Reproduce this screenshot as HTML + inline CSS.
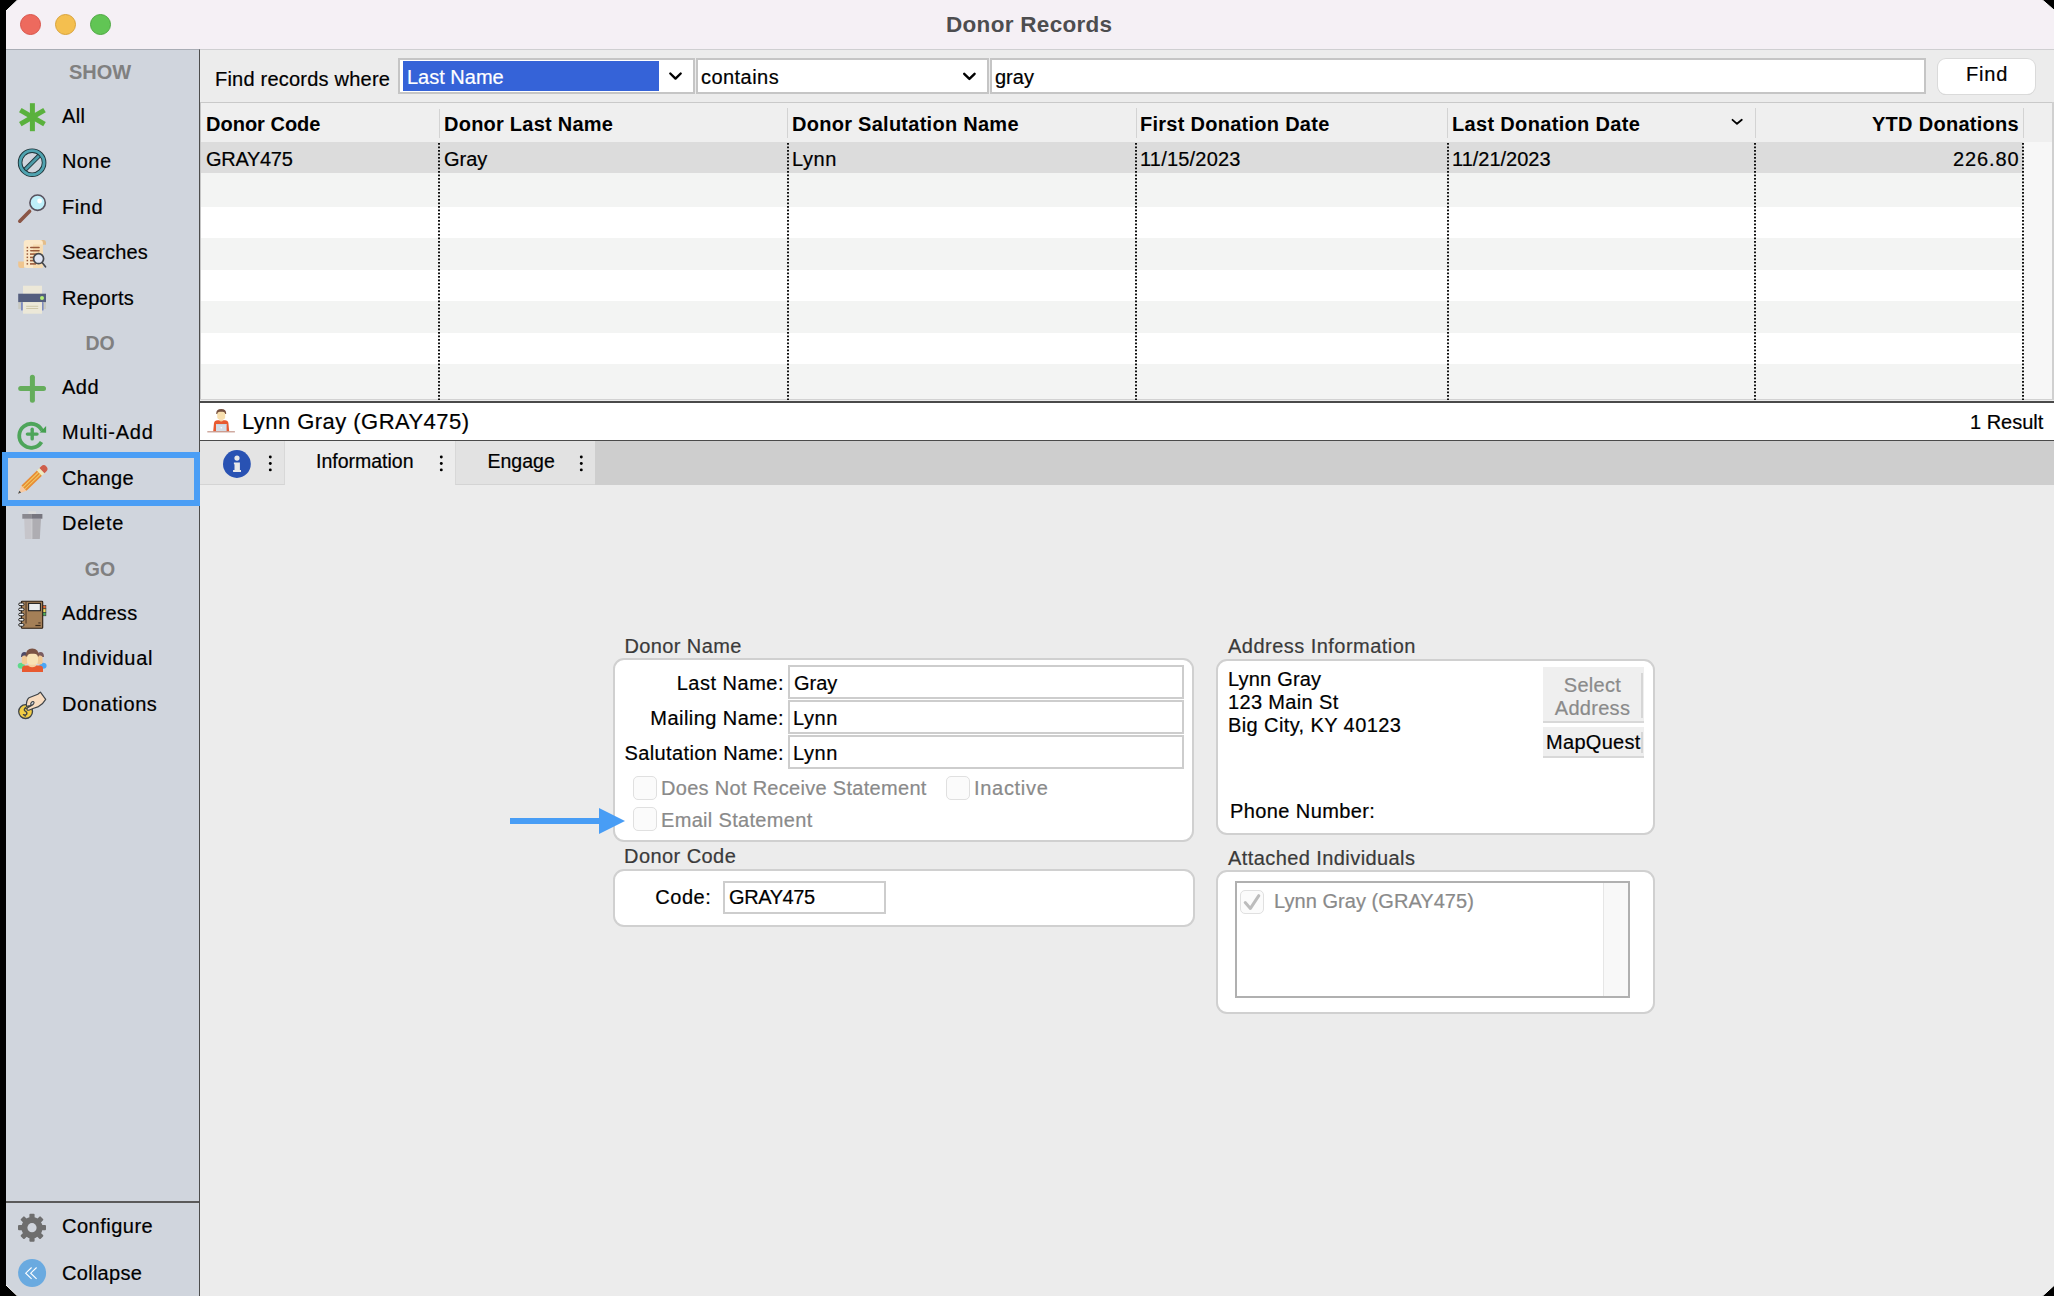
<!DOCTYPE html>
<html><head><meta charset="utf-8">
<style>
*{box-sizing:border-box;margin:0;padding:0}
html,body{width:2054px;height:1296px;overflow:hidden;background:#000}
body{font-family:"Liberation Sans",sans-serif;font-size:20px;color:#000;position:relative;-webkit-text-stroke:0.2px currentColor}
.b,.hd{-webkit-text-stroke:0}
.a{position:absolute}
.t{position:absolute;white-space:nowrap;line-height:20px;font-size:20px}
.b{font-weight:bold}
#win{position:absolute;left:6px;top:0;width:2048px;height:1296px;overflow:hidden;background:#ececec}
#pg{position:absolute;left:-6px;top:0;width:2054px;height:1296px}
.tl{position:absolute;top:14px;width:21px;height:21px;border-radius:50%}
.hd{position:absolute;font-weight:bold;color:#808080;font-size:19.5px;line-height:20px;text-align:center;width:188px;left:6px}
.ic{position:absolute}
.vl{position:absolute;width:1px;background:#d3d3d3}
.dl{position:absolute;width:2px;background-image:linear-gradient(#1a1a1a 50%,transparent 50%);background-size:2px 4px}
.box{position:absolute;background:#fff;border:2px solid #d0d0d0;border-radius:11px}
.fld{position:absolute;background:#fff;border:2px solid #cdcdcd}
.cb{position:absolute;width:24px;height:24px;border:1px solid #e0e0e0;border-radius:5px;background:#fbfbfb}
.gl{color:#3a3a3a}
.gr{color:#8a8a8a}
</style></head>
<body>
<div id="win"><div id="pg">
  <!-- title bar -->
  <div class="a" style="left:0;top:0;width:2054px;height:49px;background:#f5f0f5"></div>
  <div class="a" style="left:0;top:49px;width:2054px;height:1px;background:#cfcfd1"></div>
  <div class="tl" style="left:20px;background:#ed6a5e;border:1px solid #d9544a"></div>
  <div class="tl" style="left:55px;background:#f4bf4f;border:1px solid #d9a33a"></div>
  <div class="tl" style="left:90px;background:#61c554;border:1px solid #4ea842"></div>
  <div class="t b" style="left:946px;top:13px;font-size:22.5px;line-height:23px;color:#4d4d4f;letter-spacing:0.3px">Donor Records</div>

  <!-- sidebar -->
  <div class="a" style="left:0;top:49px;width:200px;height:1247px;background:#d0d5dd;border-right:1px solid #4d4d4d;border-top:1px solid #a9adb5"></div>
  <div class="hd" style="top:62px;font-size:20px">SHOW</div>
  <div class="t" style="left:62px;top:106px;letter-spacing:0.35px">All</div>
  <div class="t" style="left:62px;top:151px;letter-spacing:0.4px">None</div>
  <div class="t" style="left:62px;top:197px;letter-spacing:0.6px">Find</div>
  <div class="t" style="left:62px;top:242px;letter-spacing:0.19px">Searches</div>
  <div class="t" style="left:62px;top:288px;letter-spacing:0.3px">Reports</div>
  <div class="hd" style="top:333px">DO</div>
  <div class="t" style="left:62px;top:377px;letter-spacing:0.5px">Add</div>
  <div class="t" style="left:62px;top:422px;letter-spacing:0.8px">Multi-Add</div>
  <div class="t" style="left:62px;top:468px;letter-spacing:0.3px">Change</div>
  <div class="t" style="left:62px;top:513px;letter-spacing:0.7px">Delete</div>
  <div class="hd" style="top:559px">GO</div>
  <div class="t" style="left:62px;top:603px;letter-spacing:0.3px">Address</div>
  <div class="t" style="left:62px;top:648px;letter-spacing:0.65px">Individual</div>
  <div class="t" style="left:62px;top:694px;letter-spacing:0.6px">Donations</div>
  <div class="a" style="left:6px;top:1201px;width:193px;height:2px;background:#5a5a5a"></div>
  <div class="t" style="left:62px;top:1216px;letter-spacing:0.5px">Configure</div>
  <div class="t" style="left:62px;top:1263px;letter-spacing:0.29px">Collapse</div>

  <!-- toolbar -->
  <div class="a" style="left:200px;top:102px;width:1854px;height:1px;background:#c9c9c9"></div>
  <div class="t" style="left:215px;top:69px;letter-spacing:0.22px">Find records where</div>
  <div class="fld" style="left:398px;top:58px;width:297px;height:36px;border-color:#c5c5c5"></div>
  <div class="a" style="left:403px;top:61px;width:256px;height:30px;background:#3563d8"></div>
  <div class="t" style="left:407px;top:67px;color:#fff">Last Name</div>
  <div class="fld" style="left:696px;top:58px;width:293px;height:36px;border-color:#c5c5c5"></div>
  <div class="t" style="left:701px;top:67px;letter-spacing:0.45px">contains</div>
  <div class="fld" style="left:990px;top:58px;width:936px;height:36px;border-color:#c5c5c5"></div>
  <div class="t" style="left:995px;top:67px">gray</div>
  <div class="a" style="left:1938px;top:59px;width:97px;height:35px;background:#fff;border-radius:8px;box-shadow:0 0 0 1px #dadada,0 1px 0 0 #cdcdcd"></div>
  <div class="t" style="left:1966px;top:64px;letter-spacing:0.8px">Find</div>

  <!-- table -->
  <div class="a" style="left:200px;top:103px;width:1854px;height:39px;background:#efefef"></div>
  <div class="a" style="left:201px;top:142px;width:1822px;height:31px;background:#dcdcdc"></div>
  <div class="a" style="left:201px;top:173px;width:1826px;height:34px;background:#f3f4f3"></div>
  <div class="a" style="left:201px;top:207px;width:1826px;height:31px;background:#fff"></div>
  <div class="a" style="left:201px;top:238px;width:1826px;height:32px;background:#f3f4f3"></div>
  <div class="a" style="left:201px;top:270px;width:1826px;height:31px;background:#fff"></div>
  <div class="a" style="left:201px;top:301px;width:1826px;height:32px;background:#f3f4f3"></div>
  <div class="a" style="left:201px;top:333px;width:1826px;height:31px;background:#fff"></div>
  <div class="a" style="left:201px;top:364px;width:1826px;height:35px;background:#f3f4f3"></div>
  <div class="a" style="left:2024px;top:142px;width:28px;height:257px;background:#f7f7f7"></div>
  <div class="a" style="left:200px;top:102px;width:1px;height:298px;background:#c6c6c6"></div>
  <div class="a" style="left:2052px;top:102px;width:2px;height:298px;background:#d0d0d0"></div>
  <div class="a" style="left:200px;top:399px;width:1854px;height:1px;background:#d2d2d2"></div>
  <div class="vl" style="left:439px;top:109px;height:29px"></div>
  <div class="vl" style="left:787px;top:108px;height:30px"></div>
  <div class="vl" style="left:1136px;top:108px;height:30px"></div>
  <div class="vl" style="left:1447px;top:108px;height:30px"></div>
  <div class="vl" style="left:1755px;top:108px;height:30px"></div>
  <div class="vl" style="left:2023px;top:108px;height:30px"></div>
  <svg class="a" style="left:438px;top:143px" width="2" height="257"><line x1="1" y1="0" x2="1" y2="257" stroke="#111" stroke-width="2" stroke-dasharray="1.75 1.75"/></svg>
  <svg class="a" style="left:787px;top:143px" width="2" height="257"><line x1="1" y1="0" x2="1" y2="257" stroke="#111" stroke-width="2" stroke-dasharray="1.75 1.75"/></svg>
  <svg class="a" style="left:1135px;top:143px" width="2" height="257"><line x1="1" y1="0" x2="1" y2="257" stroke="#111" stroke-width="2" stroke-dasharray="1.75 1.75"/></svg>
  <svg class="a" style="left:1447px;top:143px" width="2" height="257"><line x1="1" y1="0" x2="1" y2="257" stroke="#111" stroke-width="2" stroke-dasharray="1.75 1.75"/></svg>
  <svg class="a" style="left:1754px;top:143px" width="2" height="257"><line x1="1" y1="0" x2="1" y2="257" stroke="#111" stroke-width="2" stroke-dasharray="1.75 1.75"/></svg>
  <svg class="a" style="left:2022px;top:143px" width="2" height="257"><line x1="1" y1="0" x2="1" y2="257" stroke="#111" stroke-width="2" stroke-dasharray="1.75 1.75"/></svg>
  <div class="t b" style="left:206px;top:114px">Donor Code</div>
  <div class="t b" style="left:444px;top:114px;letter-spacing:0.24px">Donor Last Name</div>
  <div class="t b" style="left:792px;top:114px;letter-spacing:0.27px">Donor Salutation Name</div>
  <div class="t b" style="left:1140px;top:114px;letter-spacing:0.27px">First Donation Date</div>
  <div class="t b" style="left:1452px;top:114px;letter-spacing:0.33px">Last Donation Date</div>
  <div class="t b" style="left:1872px;top:114px;letter-spacing:0.28px">YTD Donations</div>
  <div class="t" style="left:206px;top:149px;letter-spacing:-0.3px">GRAY475</div>
  <div class="t" style="left:444px;top:149px">Gray</div>
  <div class="t" style="left:792px;top:149px;letter-spacing:0.6px">Lynn</div>
  <div class="t" style="left:1140px;top:149px;letter-spacing:0.2px">11/15/2023</div>
  <div class="t" style="left:1452px;top:149px">11/21/2023</div>
  <div class="t" style="left:1953px;top:149px;letter-spacing:0.88px">226.80</div>

  <!-- record bar -->
  <div class="a" style="left:200px;top:401px;width:1854px;height:2px;background:#4a4a4a"></div>
  <div class="a" style="left:200px;top:403px;width:1854px;height:37px;background:#fff"></div>
  <div class="a" style="left:200px;top:440px;width:1854px;height:2px;background:#4a4a4a"></div>
  <div class="t" style="left:242px;top:411px;font-size:22px;line-height:22px;letter-spacing:0.45px">Lynn Gray (GRAY475)</div>
  <div class="t" style="left:1970px;top:412px">1 Result</div>

  <!-- tabs -->
  <div class="a" style="left:200px;top:441px;width:1854px;height:44px;background:#cecece"></div>
  <div class="a" style="left:200px;top:441px;width:85px;height:44px;background:#e4e4e4;border-bottom:1px solid #d4d4d4;border-right:1px solid #d8d8d8"></div>
  <div class="a" style="left:285px;top:441px;width:170px;height:45px;background:#ececec"></div>
  <div class="a" style="left:455px;top:441px;width:140px;height:44px;background:#e2e2e2;border-bottom:1px solid #d4d4d4;border-left:1px solid #d8d8d8"></div>
  <div class="t" style="left:316px;top:451px;font-size:19.5px">Information</div>
  <div class="t" style="left:487.5px;top:451px;font-size:19.5px">Engage</div>

  <!-- Donor Name box -->
  <div class="t gl" style="left:624.5px;top:636px;letter-spacing:0.38px">Donor Name</div>
  <div class="box" style="left:613px;top:658px;width:581px;height:184px"></div>
  <div class="t" style="left:600px;top:673px;width:184px;text-align:right;letter-spacing:0.5px">Last Name:</div>
  <div class="t" style="left:600px;top:708px;width:184px;text-align:right;letter-spacing:0.45px">Mailing Name:</div>
  <div class="t" style="left:600px;top:743px;width:184px;text-align:right;letter-spacing:0.38px">Salutation Name:</div>
  <div class="fld" style="left:788px;top:665px;width:396px;height:34px"></div>
  <div class="fld" style="left:788px;top:700px;width:396px;height:34px"></div>
  <div class="fld" style="left:788px;top:735px;width:396px;height:34px"></div>
  <div class="t" style="left:794px;top:673px">Gray</div>
  <div class="t" style="left:793px;top:708px;letter-spacing:0.6px">Lynn</div>
  <div class="t" style="left:793px;top:743px;letter-spacing:0.6px">Lynn</div>
  <div class="cb" style="left:633px;top:776px"></div>
  <div class="t gr" style="left:661px;top:778px;letter-spacing:0.3px">Does Not Receive Statement</div>
  <div class="cb" style="left:946px;top:776px"></div>
  <div class="t gr" style="left:974px;top:778px;letter-spacing:0.7px">Inactive</div>
  <div class="cb" style="left:633px;top:807px"></div>
  <div class="t gr" style="left:661px;top:810px;letter-spacing:0.32px">Email Statement</div>

  <!-- arrow -->
  <div class="a" style="left:510px;top:818px;width:90px;height:6px;background:#489df5"></div>
  <svg class="a" style="left:598px;top:807px" width="28" height="28"><polygon points="1,1 27,14 1,27" fill="#489df5"/></svg>

  <!-- Donor Code box -->
  <div class="t gl" style="left:624px;top:846px;letter-spacing:0.44px">Donor Code</div>
  <div class="box" style="left:613px;top:869px;width:582px;height:58px"></div>
  <div class="t" style="left:600px;top:887px;width:111.5px;text-align:right;letter-spacing:0.6px">Code:</div>
  <div class="fld" style="left:723px;top:881px;width:163px;height:33px"></div>
  <div class="t" style="left:729px;top:887px;letter-spacing:-0.4px">GRAY475</div>

  <!-- Address box -->
  <div class="t gl" style="left:1228px;top:636px;letter-spacing:0.47px">Address Information</div>
  <div class="box" style="left:1216px;top:659px;width:439px;height:176px"></div>
  <div class="t" style="left:1228px;top:669px;letter-spacing:0.2px">Lynn Gray</div>
  <div class="t" style="left:1228px;top:692px;letter-spacing:0.35px">123 Main St</div>
  <div class="t" style="left:1228px;top:715px;letter-spacing:0.4px">Big City, KY 40123</div>
  <div class="a" style="left:1543px;top:667px;width:101px;height:56px;background:#efefef;border-bottom:2px solid #d8d8d8"></div>
  <div class="a" style="left:1641px;top:673px;width:2px;height:45px;background:#d6d6d6"></div>
  <div class="t gr" style="left:1543px;top:675px;width:99px;text-align:center;letter-spacing:0.3px">Select</div>
  <div class="t gr" style="left:1543px;top:698px;width:99px;text-align:center;letter-spacing:0.3px">Address</div>
  <div class="a" style="left:1543px;top:727px;width:101px;height:31px;background:#efefef;border-bottom:2px solid #d8d8d8"></div>
  <div class="a" style="left:1641px;top:732px;width:2px;height:21px;background:#d6d6d6"></div>
  <div class="t" style="left:1546px;top:732px;letter-spacing:0.3px">MapQuest</div>
  <div class="t" style="left:1230px;top:801px;letter-spacing:0.4px">Phone Number:</div>

  <!-- Attached box -->
  <div class="t gl" style="left:1228px;top:848px;letter-spacing:0.42px">Attached Individuals</div>
  <div class="box" style="left:1216px;top:870px;width:439px;height:144px"></div>
  <div class="a" style="left:1235px;top:881px;width:395px;height:117px;border:2px solid #b0b0b0;background:#fff"></div>
  <div class="a" style="left:1603px;top:883px;width:25px;height:113px;background:#f8f8f8;border-left:1px solid #e6e6e6"></div>
  <div class="cb" style="left:1240px;top:890px"></div>
  <div class="t gr" style="left:1274px;top:891px;letter-spacing:0.05px">Lynn Gray (GRAY475)</div>

  <!-- sidebar icons -->
  <svg class="a" style="left:12px;top:96px" width="40" height="40" viewBox="0 0 40 40">
    <g stroke="#5ab13d" stroke-width="5"><line x1="20.4" y1="7.2" x2="20.4" y2="35.2"/><line x1="8.3" y1="14.2" x2="32.5" y2="28.2"/><line x1="8.3" y1="28.2" x2="32.5" y2="14.2"/></g>
  </svg>
  <svg class="a" style="left:12px;top:142px" width="40" height="40" viewBox="0 0 40 40">
    <line x1="28.6" y1="12.2" x2="11.6" y2="29.2" stroke="#1f3338" stroke-width="4.6"/>
    <line x1="28.6" y1="12.2" x2="11.6" y2="29.2" stroke="#4d9ba8" stroke-width="2.8"/>
    <circle cx="20.1" cy="20.7" r="12" fill="none" stroke="#1f3338" stroke-width="4.6"/>
    <circle cx="20.1" cy="20.7" r="12" fill="none" stroke="#4fa3b0" stroke-width="2.8"/>
  </svg>
  <svg class="a" style="left:12px;top:187px" width="40" height="40" viewBox="0 0 40 40">
    <line x1="17.6" y1="24.2" x2="7.8" y2="34.2" stroke="#8b5646" stroke-width="3.6" stroke-linecap="round"/>
    <circle cx="25.6" cy="15.7" r="7.7" fill="#bff0fa" stroke="#58525e" stroke-width="1.6"/>
    <circle cx="27.6" cy="14" r="2.4" fill="#fff"/>
  </svg>
  <svg class="a" style="left:12px;top:233px" width="40" height="40" viewBox="0 0 40 40">
    <path d="M14.5 7 H32 Q34 7 34 9.5 V11.7 H20 V9 Q20 7 17 7Z" fill="#e3bd8a"/>
    <rect x="11.7" y="7" width="19.2" height="28" rx="3" fill="#fbe8c9"/>
    <rect x="21" y="11.5" width="9.9" height="23.5" fill="#f7dcb2"/>
    <path d="M6.2 28.5 H12 V35 H8.5 Q6.2 35 6.2 32Z" fill="#efc58f"/>
    <g fill="#9a5a3c"><rect x="14.6" y="13.8" width="1.5" height="1.5"/><rect x="14.6" y="17" width="1.5" height="1.5"/><rect x="14.6" y="20.3" width="1.5" height="1.5"/><rect x="14.6" y="23.6" width="1.5" height="1.5"/><rect x="14.6" y="26.8" width="1.5" height="1.5"/><rect x="14.6" y="30.1" width="1.5" height="1.5"/>
    <rect x="18" y="13.7" width="9.8" height="1.6" rx=".8"/><rect x="18" y="17" width="9.8" height="1.6" rx=".8"/><rect x="18" y="20.3" width="8" height="1.6"/><rect x="18" y="23.6" width="5" height="1.6"/><rect x="18" y="26.8" width="5" height="1.6"/><rect x="18" y="30.1" width="6" height="1.6"/></g>
    <line x1="30.3" y1="29.8" x2="33.5" y2="33.8" stroke="#44474d" stroke-width="1.7" stroke-linecap="round"/>
    <circle cx="26.6" cy="25.7" r="5" fill="#dfe4f3" stroke="#44474d" stroke-width="1.7"/>
  </svg>
  <svg class="a" style="left:12px;top:278px" width="40" height="40" viewBox="0 0 40 40">
    <rect x="6.2" y="24" width="27.8" height="7" fill="#c9cac2"/>
    <rect x="11" y="7.7" width="19" height="8.5" fill="#ece8d8"/>
    <rect x="6.2" y="15.7" width="27.8" height="8.4" fill="#545e7e"/>
    <circle cx="30" cy="20" r="2" fill="#b4ef78"/>
    <rect x="9" y="24" width="1.8" height="8.6" rx=".9" fill="#7e8cc0"/>
    <rect x="29.8" y="24" width="1.8" height="8.6" rx=".9" fill="#7e8cc0"/>
    <rect x="11" y="24.1" width="19" height="11.6" fill="#ece8d8"/>
    <rect x="14.2" y="27.8" width="12" height="1" fill="#cec7a8"/><rect x="14.2" y="30" width="12" height="1" fill="#cec7a8"/>
  </svg>
  <svg class="a" style="left:12px;top:368px" width="40" height="40" viewBox="0 0 40 40">
    <g stroke="#65ad5b" stroke-width="5" stroke-linecap="round"><line x1="20.4" y1="9.3" x2="20.4" y2="32.2"/><line x1="8.7" y1="20.6" x2="31.5" y2="20.6"/></g>
  </svg>
  <svg class="a" style="left:12px;top:413px" width="40" height="40" viewBox="0 0 40 40">
    <path d="M30 17.5 A12 12 0 1 0 29.5 29" fill="none" stroke="#4ea55a" stroke-width="3.8"/>
    <polygon points="34.1,13 34.1,19.8 27.6,19.4" fill="#45a050"/>
    <g stroke="#4ea55a" stroke-width="3.4" stroke-linecap="round"><line x1="20.2" y1="16.3" x2="20.2" y2="25.9"/><line x1="15.4" y1="21.1" x2="25" y2="21.1"/></g>
  </svg>
  <svg class="a" style="left:12px;top:459px" width="40" height="40" viewBox="0 0 40 40">
    <g transform="translate(19.9 21.4) rotate(-44)">
      <path d="M-19.2 0 L-11 -3.6 L-11 3.6Z" fill="#f8caa2"/>
      <path d="M-19.2 0 L-16.2 -1.3 L-16.2 1.3Z" fill="#3f4a50"/>
      <rect x="-11" y="-3.6" width="21.5" height="7.2" fill="#e88d35"/>
      <rect x="-11" y="-1.8" width="21.5" height="0.9" fill="#f2d46a"/>
      <rect x="-11" y="0.9" width="21.5" height="0.9" fill="#f2d46a"/>
      <rect x="10.5" y="-3.6" width="3.5" height="7.2" fill="#efeabf"/>
      <path d="M14 -3.6 H16.5 A3.6 3.6 0 0 1 16.5 3.6 H14Z" fill="#cf5e4b"/>
    </g>
  </svg>
  <svg class="a" style="left:12px;top:504px" width="40" height="40" viewBox="0 0 40 40">
    <rect x="16.5" y="7.3" width="7.5" height="2.5" fill="#dcdcdc"/>
    <path d="M12.2 14.7 H19.8 V34.9 H13Z" fill="#c6c5ca"/>
    <path d="M19.8 14.7 H29 L27.8 34.9 H19.8Z" fill="#aeadb2"/>
    <rect x="19.2" y="14.7" width="1.2" height="20.2" fill="#cdcdd0"/>
    <rect x="10.3" y="10" width="9.6" height="4.7" fill="#8a8990"/>
    <rect x="19.9" y="10" width="10.5" height="4.7" fill="#77767f"/>
  </svg>
  <svg class="a" style="left:12px;top:594px" width="40" height="40" viewBox="0 0 40 40">
    <rect x="9.4" y="7.3" width="21.3" height="27" rx="0.8" fill="#a47f57" stroke="#2a1d10" stroke-width="1.1"/>
    <rect x="13.4" y="8" width="1.3" height="21.5" fill="#5d4530"/>
    <rect x="16.6" y="9.4" width="11.8" height="7.3" fill="#e9ecef" stroke="#222" stroke-width="1.1"/>
    <rect x="31" y="11.5" width="2.9" height="3.3" fill="#f06a30" stroke="#333" stroke-width=".6"/>
    <rect x="31" y="14.8" width="2.9" height="3.5" fill="#f2dc5c" stroke="#333" stroke-width=".6"/>
    <rect x="31" y="18.3" width="2.9" height="3.5" fill="#4fb35a" stroke="#333" stroke-width=".6"/>
    <g fill="#f4f4f4" stroke="#222" stroke-width="1"><rect x="6.7" y="9" width="5.3" height="2.6" rx="1.3"/><rect x="6.7" y="14.1" width="5.3" height="2.6" rx="1.3"/><rect x="6.7" y="19.2" width="5.3" height="2.6" rx="1.3"/><rect x="6.7" y="24.4" width="5.3" height="2.6" rx="1.3"/><rect x="6.7" y="29.6" width="5.3" height="2.6" rx="1.3"/></g>
    <rect x="23.4" y="30.9" width="5.2" height="1.2" fill="#3a2a1a"/><rect x="26.3" y="28" width="2.3" height="1.8" fill="#6a5038"/>
  </svg>
  <svg class="a" style="left:12px;top:640px" width="40" height="40" viewBox="0 0 40 40">
    <ellipse cx="9.3" cy="25.8" rx="3.6" ry="3" fill="#5fd98a"/>
    <ellipse cx="31" cy="25.8" rx="3.6" ry="3" fill="#4ba6f5"/>
    <path d="M9 17 Q9 12 12.5 12 Q15.5 12 15.5 17Z" fill="#4e4a66"/>
    <path d="M25 17 Q25 12 28.5 12 Q32 12 32 17Z" fill="#7a5c60"/>
    <rect x="9.8" y="15.5" width="5.6" height="9" rx="2.5" fill="#f2c994"/>
    <rect x="25" y="15.5" width="5.6" height="9" rx="2.5" fill="#f2c994"/>
    <path d="M10 32 V28.5 Q10 25.5 14 25.5 H27 Q31 25.5 31 28.5 V32Z" fill="#e85a30"/>
    <path d="M16.5 24 H24 V26 Q20.2 28.5 16.5 26Z" fill="#f6cf9e"/>
    <path d="M13.6 16.5 Q13.6 8.6 20.2 8.6 Q26.9 8.6 26.9 16.5Z" fill="#7b5344"/>
    <rect x="15" y="13.8" width="11" height="11" rx="4" fill="#f8e2b5"/>
  </svg>
  <svg class="a" style="left:12px;top:685px" width="40" height="40" viewBox="0 0 40 40">
    <circle cx="13.6" cy="26.6" r="6.9" fill="#f2cd44" stroke="#3e4347" stroke-width="1.3"/>
    <path d="M15.9 23.4 Q13.8 22.6 12.7 23.6 Q11.6 25 13.4 26.3 Q15.6 27.6 14.6 29.4 Q13.4 30.6 11.4 29.6 M13.3 22.6 V23.6 M13.2 29.9 V31.2" fill="none" stroke="#3e4347" stroke-width="1.3" stroke-linecap="round"/>
    <path d="M28.4 7.1 L33.7 14.4 L30.3 18.8 L26.5 21.6 L21 23.5 L16.8 25.2 Q14.8 25.6 14.9 23.8 Q15.2 22.8 16.5 22.2 L19.6 20.4 Q18.8 19.8 18.4 20.6 L14.4 21.4 Q14.2 15 17 12.8 L25.8 9.2Z" fill="#f8dcc0" stroke="#3e4347" stroke-width="1.2" stroke-linejoin="round"/>
    <ellipse cx="20.4" cy="18.3" rx="1.3" ry="2" transform="rotate(40 20.4 18.3)" fill="#d0d5dd" stroke="#3e4347" stroke-width="1.1"/>
  </svg>
  <svg class="a" style="left:12px;top:1207px" width="40" height="40" viewBox="0 0 40 40">
    <g fill="#6e6e6e" transform="translate(20 20.7)">
      <rect x="-2.6" y="-14" width="5.2" height="6" rx="1" transform="rotate(0)"/><rect x="-2.6" y="-14" width="5.2" height="6" rx="1" transform="rotate(45)"/><rect x="-2.6" y="-14" width="5.2" height="6" rx="1" transform="rotate(90)"/><rect x="-2.6" y="-14" width="5.2" height="6" rx="1" transform="rotate(135)"/><rect x="-2.6" y="-14" width="5.2" height="6" rx="1" transform="rotate(180)"/><rect x="-2.6" y="-14" width="5.2" height="6" rx="1" transform="rotate(225)"/><rect x="-2.6" y="-14" width="5.2" height="6" rx="1" transform="rotate(270)"/><rect x="-2.6" y="-14" width="5.2" height="6" rx="1" transform="rotate(315)"/>
      <circle r="10.6"/>
    </g>
    <circle cx="20" cy="20.7" r="4.6" fill="#d0d5dd"/>
  </svg>
  <svg class="a" style="left:12px;top:1253px" width="40" height="40" viewBox="0 0 40 40">
    <circle cx="20.1" cy="20" r="14" fill="#6aaae0"/>
    <path d="M19.6 14.5 L13.7 20.2 L19.6 25.9 M24.6 14.5 L18.7 20.2 L24.6 25.9" fill="none" stroke="#fff" stroke-width="1.1"/>
  </svg>

  <!-- toolbar chevrons -->
  <svg class="a" style="left:660px;top:66px" width="30" height="20"><path d="M10.3 7.5 L15.5 12.6 L20.7 7.5" fill="none" stroke="#000" stroke-width="2.4" stroke-linecap="round" stroke-linejoin="round"/></svg>
  <svg class="a" style="left:955px;top:66px" width="30" height="20"><path d="M9.2 7.8 L14.4 12.9 L19.6 7.8" fill="none" stroke="#000" stroke-width="2.4" stroke-linecap="round" stroke-linejoin="round"/></svg>
  <svg class="a" style="left:1727px;top:112px" width="20" height="16"><path d="M5.5 7.8 L10 11.8 L14.8 7.8" fill="none" stroke="#000" stroke-width="1.8" stroke-linecap="round" stroke-linejoin="round"/></svg>

  <!-- record person icon -->
  <svg class="a" style="left:200px;top:400px" width="40" height="40" viewBox="0 0 40 40">
    <path d="M16.2 14 Q16 9 21.2 9 Q26.4 9 26.2 14Z" fill="#76503f"/>
    <rect x="17.2" y="11.8" width="8" height="7.6" rx="2.6" fill="#f8dfae"/>
    <path d="M13.2 31.4 L14 23 Q14.6 20.3 17.5 20.3 H25 Q27.8 20.3 28.4 23 L29.2 31.4Z" fill="#e85a30"/>
    <path d="M19.2 19.6 H23.2 V20.6 Q21.2 22.5 19.2 20.6Z" fill="#f6cf9e"/>
    <rect x="16" y="24.2" width="10.6" height="7" fill="#d5dde6"/>
    <rect x="16" y="24.2" width="10.6" height="0.6" fill="#bfe4f5"/>
    <circle cx="21.3" cy="27.7" r=".8" fill="#fff"/>
    <rect x="7.3" y="31.2" width="27.6" height="1.2" fill="#c4968a"/>
  </svg>

  <!-- info icon & dots -->
  <svg class="a" style="left:222px;top:449px" width="30" height="30" viewBox="0 0 30 30">
    <circle cx="14.9" cy="15" r="13.9" fill="#2952b3"/>
    <circle cx="15" cy="9.1" r="2.6" fill="#e9e9e9"/>
    <path d="M11.9 13.5 H17.9 V21 H19 V23 H11.1 V21 H12.5 V15.3 H11.9Z" fill="#e9e9e9"/>
  </svg>
  <svg class="a" style="left:265px;top:450px" width="10" height="28"><g fill="#000"><circle cx="5.3" cy="7" r="1.45"/><circle cx="5.3" cy="13.5" r="1.45"/><circle cx="5.3" cy="19.9" r="1.45"/></g></svg>
  <svg class="a" style="left:436px;top:450px" width="10" height="28"><g fill="#000"><circle cx="5.3" cy="7" r="1.45"/><circle cx="5.3" cy="13.5" r="1.45"/><circle cx="5.3" cy="19.9" r="1.45"/></g></svg>
  <svg class="a" style="left:576px;top:450px" width="10" height="28"><g fill="#000"><circle cx="5.3" cy="7" r="1.45"/><circle cx="5.3" cy="13.5" r="1.45"/><circle cx="5.3" cy="19.9" r="1.45"/></g></svg>

  <!-- attached checkmark -->
  <svg class="a" style="left:1240px;top:890px" width="25" height="24"><path d="M5.2 12.6 L10.4 18.4 L18.8 5.7" fill="none" stroke="#bcbcbc" stroke-width="3" stroke-linecap="round" stroke-linejoin="round"/></svg>
</div></div>
<svg class="a" style="left:0;top:0" width="2054" height="1296" viewBox="0 0 2054 1296">
  <g fill="#000"><polygon points="6,0 17.5,0 6,11"/><polygon points="2042.5,0 2054,0 2054,10"/><polygon points="6,1296 6,1285 17.5,1296"/><polygon points="2054,1296 2042.5,1296 2054,1285.5"/></g>
  <g stroke="#fafafa" stroke-width="1"><line x1="17.5" y1="0" x2="6" y2="11"/><line x1="2042.5" y1="0" x2="2054" y2="10"/><line x1="6" y1="1285" x2="17.5" y2="1296"/><line x1="2042.5" y1="1296" x2="2054" y2="1285.5"/></g>
</svg>
<div class="a" style="left:2px;top:452px;width:198px;height:54px;border:6px solid #4a9ef5"></div>
</body></html>
